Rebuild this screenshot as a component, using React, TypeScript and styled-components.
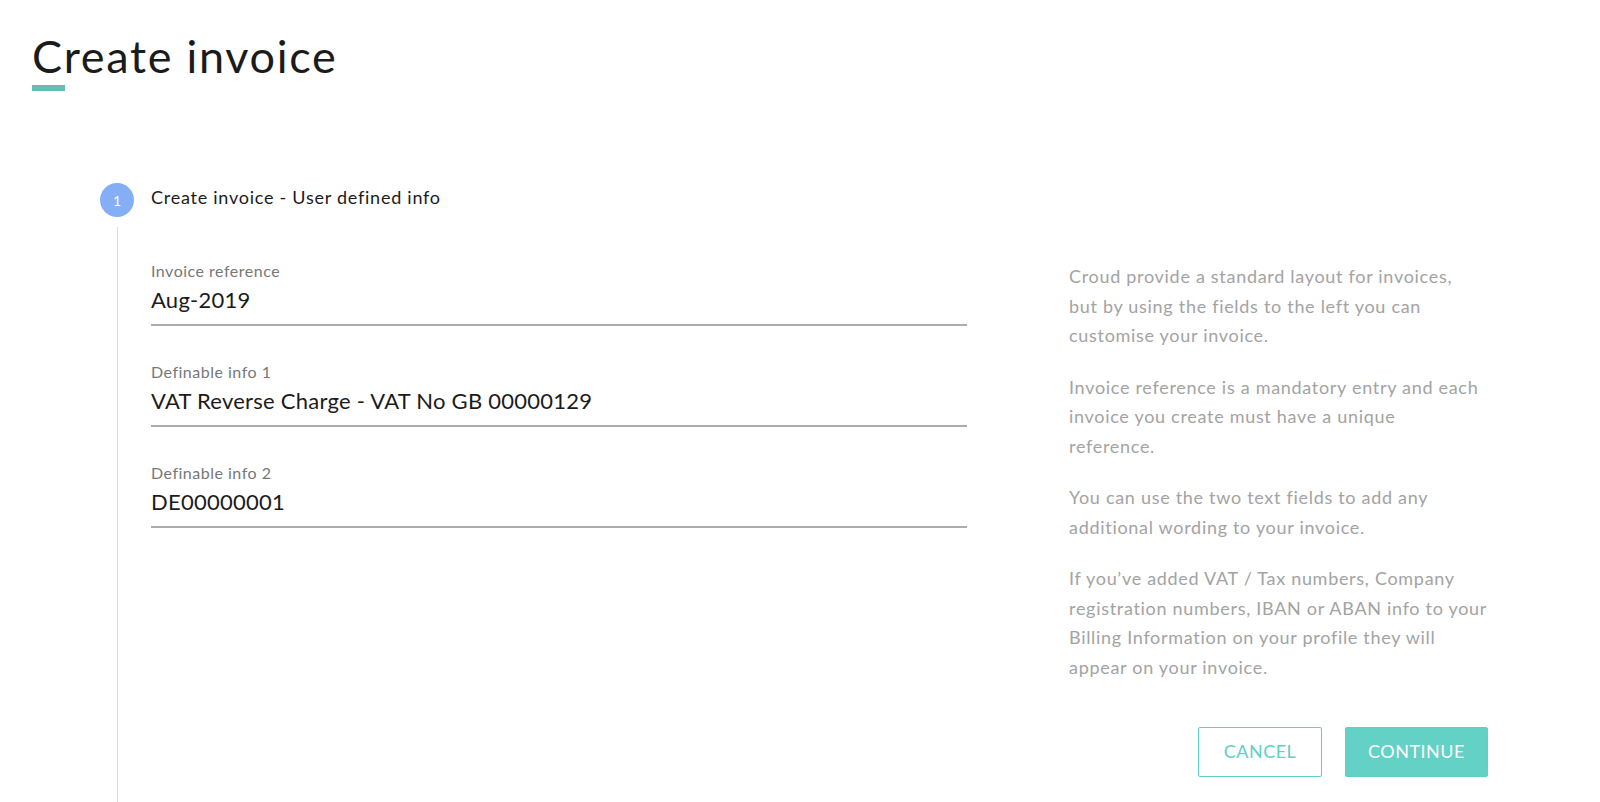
import React from "react";
import styled, { createGlobalStyle } from "styled-components";

const GlobalStyle = createGlobalStyle`
  html, body { margin: 0; padding: 0; background: #ffffff; }
  body { font-family: Lato, "Open Sans", sans-serif; color: #1b1b1b; }
  * { box-sizing: border-box; }
`;

const Page = styled.div`
  padding: 34px 0 0 32px;
  height: 802px;
  overflow: hidden;
  display: flex;
  flex-direction: column;
`;

const Title = styled.h1`
  margin: 0;
  font-size: 45px;
  line-height: 45px;
  font-weight: 400;
  color: #1b1b1b;
  letter-spacing: 1.7px;
`;

const TitleBar = styled.div`
  width: 33px;
  height: 6px;
  margin-top: 6px;
  background: #66bdb4;
`;

const Step = styled.section`
  margin: 92px 0 0 68px;
  display: flex;
  flex-direction: column;
  flex: 1;
`;

const StepHeader = styled.div`
  display: flex;
  align-items: center;
  gap: 17px;
`;

const StepCircle = styled.div`
  width: 34px;
  height: 34px;
  border-radius: 50%;
  background: #84aef6;
  color: #ffffff;
  font-size: 14px;
  display: flex;
  align-items: center;
  justify-content: center;
`;

const StepTitle = styled.div`
  font-size: 18px;
  line-height: 22px;
  padding-bottom: 6px;
  letter-spacing: 0.75px;
  color: #1b1b1b;
`;

const StepBody = styled.div`
  margin: 10px 0 0 17px;
  border-left: 1px solid #dcdcdc;
  padding: 35px 0 0 33px;
  display: flex;
  flex: 1;
`;

const Form = styled.div`
  width: 816px;
  display: flex;
  flex-direction: column;
  gap: 37px;
`;

const Field = styled.label`
  display: flex;
  flex-direction: column;
  border-bottom: 2px solid #acacac;
  padding-bottom: 11px;
`;

const FieldLabel = styled.span`
  font-size: 16px;
  line-height: 18px;
  letter-spacing: 0.5px;
  color: #777777;
`;

const FieldValue = styled.span`
  margin-top: 7px;
  font-size: 22px;
  line-height: 26px;
  letter-spacing: 0.25px;
  color: #1b1b1b;
`;

const Aside = styled.aside`
  margin-left: 102px;
  width: 419px;
  display: flex;
  flex-direction: column;
`;

const Help = styled.p`
  margin: 0 0 22px;
  font-size: 18px;
  line-height: 29.5px;
  letter-spacing: 0.7px;
  white-space: nowrap;
  color: #a3a3a3;
`;

const Actions = styled.div`
  margin-top: 23px;
  display: flex;
  justify-content: flex-end;
  gap: 23px;
`;

const Button = styled.button<{ $primary?: boolean }>`
  height: 50px;
  width: ${(p) => (p.$primary ? "143px" : "124px")};
  border-radius: 2px;
  border: 1.5px solid #5fd0c4;
  background: ${(p) => (p.$primary ? "#63d1c5" : "#ffffff")};
  color: ${(p) => (p.$primary ? "#ffffff" : "#5fd0c4")};
  font-family: Lato, "Open Sans", sans-serif;
  font-size: 18px;
  letter-spacing: 0.5px;
  cursor: pointer;
  padding: 0 0 2px;
`;

const fields = [
  { label: "Invoice reference", value: "Aug-2019" },
  { label: "Definable info 1", value: "VAT Reverse Charge - VAT No GB 00000129" },
  { label: "Definable info 2", value: "DE00000001" },
];

const help: string[][] = [
  [
    "Croud provide a standard layout for invoices,",
    "but by using the fields to the left you can",
    "customise your invoice.",
  ],
  [
    "Invoice reference is a mandatory entry and each",
    "invoice you create must have a unique",
    "reference.",
  ],
  ["You can use the two text fields to add any", "additional wording to your invoice."],
  [
    "If you\u2019ve added VAT / Tax numbers, Company",
    "registration numbers, IBAN or ABAN info to your",
    "Billing Information on your profile they will",
    "appear on your invoice.",
  ],
];

export default function App() {
  return (
    <>
      <GlobalStyle />
      <Page>
        <Title>Create invoice</Title>
        <TitleBar />
        <Step>
          <StepHeader>
            <StepCircle>1</StepCircle>
            <StepTitle>Create invoice - User defined info</StepTitle>
          </StepHeader>
          <StepBody>
            <Form>
              {fields.map((f) => (
                <Field key={f.label}>
                  <FieldLabel>{f.label}</FieldLabel>
                  <FieldValue>{f.value}</FieldValue>
                </Field>
              ))}
            </Form>
            <Aside>
              {help.map((lines, i) => (
                <Help key={i}>
                  {lines.map((l, j) => (
                    <React.Fragment key={j}>
                      {j > 0 && <br />}
                      {l}
                    </React.Fragment>
                  ))}
                </Help>
              ))}
              <Actions>
                <Button>CANCEL</Button>
                <Button $primary>CONTINUE</Button>
              </Actions>
            </Aside>
          </StepBody>
        </Step>
      </Page>
    </>
  );
}
